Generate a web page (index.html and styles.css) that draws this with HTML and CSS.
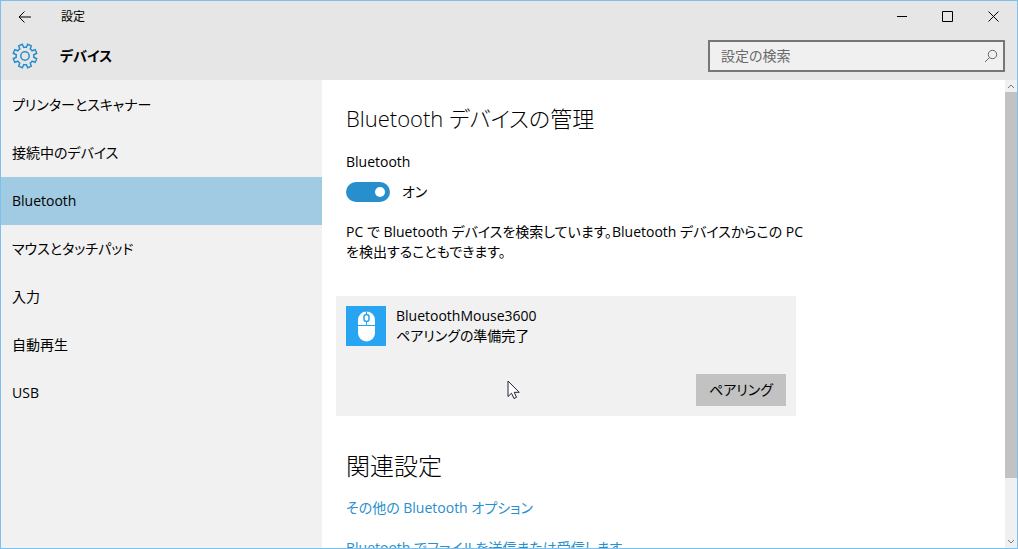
FILE: index.html
```
<!DOCTYPE html>
<html lang="ja">
<head>
  <meta charset="UTF-8">
  <meta name="viewport" content="width=device-width, initial-scale=1.0">
  <title>設定</title>
  <link rel="stylesheet" href="styles.css">
</head>
<body>
  <div class="window">
    <header class="header">
      <div class="title-bar">
        <button type="button" class="back" aria-label="戻る">
          <svg width="14" height="12" viewBox="0 0 14 12"><path d="M13 6H1M6.500 .5L1 6l5.500 5.500"/></svg>
        </button>
        <span class="window-name">設定</span>
        <div class="caption">
          <button type="button" aria-label="最小化">
            <svg width="12" height="12" viewBox="0 0 12 12"><path d="M1 5.500h10"/></svg>
          </button>
          <button type="button" aria-label="最大化">
            <svg width="12" height="12" viewBox="0 0 12 12"><path d="M.5 .5h10v10h-10z"/></svg>
          </button>
          <button type="button" aria-label="閉じる">
            <svg width="12" height="12" viewBox="0 0 12 12"><path d="M.5 .5l10 10M10.500 .5l-10 10"/></svg>
          </button>
        </div>
      </div>
      <div class="page-bar">
        <svg class="gear" width="26" height="26" viewBox="0 0 26 26">
          <path d="M10.300 1.300L11.700 4.300Q13 4 14.300 4.300L15.700 1.300L19.300 2.800L18.200 5.900Q19.300 6.700 20.100 7.800L23.200 6.700L24.700 10.300L21.700 11.700Q22 13 21.700 14.300L24.700 15.700L23.200 19.300L20.100 18.200Q19.300 19.300 18.200 20.100L19.300 23.200L15.700 24.700L14.300 21.700Q13 22 11.700 21.700L10.300 24.700L6.700 23.200L7.800 20.100Q6.700 19.300 5.900 18.200L2.800 19.300L1.300 15.700L4.300 14.300Q4 13 4.300 11.700L1.300 10.300L2.800 6.700L5.900 7.800Q6.700 6.700 7.800 5.900L6.700 2.800Z"/>
          <circle cx="13" cy="13" r="4.200"/>
        </svg>
        <h1>デバイス</h1>
        <form class="search">
          <input type="text" placeholder="設定の検索" aria-label="設定の検索">
          <button type="button" aria-label="検索">
            <svg width="14" height="14" viewBox="0 0 14 14"><circle cx="8.500" cy="5.500" r="4.200"/><path d="M5.500 8.500L1 13"/></svg>
          </button>
        </form>
      </div>
    </header>
    <div class="main">
      <nav class="sidebar">
        <a href="#">プリンターとスキャナー</a>
        <a href="#">接続中のデバイス</a>
        <a href="#" class="current">Bluetooth</a>
        <a href="#">マウスとタッチパッド</a>
        <a href="#">入力</a>
        <a href="#">自動再生</a>
        <a href="#">USB</a>
      </nav>
      <div class="content">
        <h2>Bluetooth デバイスの管理</h2>
        <label class="switch-label" for="bluetooth">Bluetooth</label>
        <div class="switch-row">
          <input type="checkbox" id="bluetooth" class="switch" checked>
          <span>オン</span>
        </div>
        <p class="note">PC で Bluetooth デバイスを検索しています。Bluetooth デバイスからこの PC<br>を検出することもできます。</p>
        <div class="device">
          <div class="device-info">
            <svg width="40" height="40" viewBox="0 0 40 40">
              <rect width="40" height="40" fill="#27a4f2"/>
              <path d="M12 19v-5a8.500 8.500 0 0 1 17 0v5z" fill="#fff"/>
              <path d="M12 20h17v7a8.500 8.500 0 0 1-17 0z" fill="#fff"/>
              <path d="M20.500 5v14" stroke="#27a4f2"/>
              <rect x="18" y="8.500" width="5" height="7" rx="2.500" fill="#fff" stroke="#27a4f2" stroke-width="1.500"/>
            </svg>
            <div>
              <div>BluetoothMouse3600</div>
              <div>ペアリングの準備完了</div>
            </div>
          </div>
          <button type="button" class="pair">ペアリング</button>
          <svg class="pointer" width="14" height="20" viewBox="0 0 14 20"><path d="M1 1v15.500l3.500-3.300 2.500 5.300 2.500-1.200-2.300-5h5z"/></svg>
        </div>
        <h2 class="related">関連設定</h2>
        <a href="#" class="link">その他の Bluetooth オプション</a>
        <a href="#" class="link">Bluetooth でファイルを送信または受信します</a>
      </div>
      <div class="scrollbar">
        <svg width="12" height="12" viewBox="0 0 12 12"><path d="M3 8l3-3 3 3"/></svg>
        <div class="track"><div class="thumb"></div></div>
        <svg width="12" height="12" viewBox="0 0 12 12"><path d="M3 4l3 3 3-3"/></svg>
      </div>
    </div>
  </div>
</body>
</html>
```
FILE: styles.css
```
* {
  box-sizing: border-box;
}
body {
  margin: 0;
  color: #000;
  font: 14px/20px "Open Sans", "Noto Sans CJK JP", sans-serif;
  font-feature-settings: "palt";
}
button, input {
  font: inherit;
  font-feature-settings: inherit;
  color: inherit;
  border: 0;
  padding: 0;
  background: none;
}
a {
  color: inherit;
  text-decoration: none;
}
svg {
  display: block;
  flex: none;
  fill: none;
  stroke-width: 1;
}
h1, h2, p {
  margin: 0;
}
.window {
  height: 100vh;
  display: flex;
  flex-direction: column;
  border: 1px solid #7cc0ee;
  overflow: hidden;
}
.header {
  flex: none;
  background: #e6e6e6;
}
.title-bar {
  height: 31px;
  display: flex;
  align-items: center;
}
.title-bar button {
  height: 31px;
  width: 46px;
  display: flex;
  align-items: center;
  justify-content: center;
}
.title-bar svg {
  stroke: #000;
}
.title-bar .back {
  width: 48px;
}
.window-name {
  margin-left: 12px;
  font-size: 12px;
}
.caption {
  display: flex;
  margin-left: auto;
}
.page-bar {
  height: 48px;
  display: flex;
  align-items: center;
  padding: 0 12px 0 11px;
}
.gear {
  stroke: #298fcc;
  stroke-width: 1.500;
  margin-right: 22px;
}
h1 {
  font-size: 14px;
  font-weight: 600;
}
.search {
  width: 297px;
  height: 32px;
  margin-left: auto;
  display: flex;
  align-items: center;
  border: 2px solid #767676;
  background: #f0f0f0;
}
.search input {
  flex: 1;
  min-width: 0;
  padding-left: 11px;
  outline: none;
}
.search input::placeholder {
  color: #6a6a6a;
}
.search button {
  padding: 0 5px;
}
.search svg {
  stroke: #666;
}
.main {
  flex: 1;
  min-height: 0;
  display: flex;
  background: #fff;
}
.sidebar {
  flex: none;
  width: 321px;
  padding-top: 1px;
  background: #f1f1f1;
}
.sidebar a {
  display: flex;
  align-items: center;
  height: 48px;
  padding-left: 11px;
}
.sidebar .current {
  background: #a1cae3;
}
.content {
  flex: 1;
  min-width: 0;
  padding: 22px 24px 0;
  overflow: hidden;
}
h2 {
  font-size: 22px;
  line-height: 32px;
  font-weight: 300;
  margin-bottom: 18px;
}
.related {
  font-size: 24px;
}
.switch-label {
  display: block;
  margin-bottom: 10px;
}
.switch-row {
  display: flex;
  align-items: center;
  gap: 12px;
}
.switch {
  appearance: none;
  display: flex;
  align-items: center;
  justify-content: flex-end;
  width: 44px;
  height: 20px;
  margin: 0;
  padding: 0 5px;
  border-radius: 10px;
  background: #298fcc;
}
.switch::before {
  content: "";
  width: 10px;
  height: 10px;
  border-radius: 50%;
  background: #fff;
}
.note {
  margin-top: 20px;
  white-space: nowrap;
}
.device {
  position: relative;
  max-width: 460px;
  margin: 34px 0 34px -10px;
  padding: 10px;
  background: #f1f1f1;
}
.device-info {
  display: flex;
  gap: 10px;
}
.pair {
  display: block;
  width: 90px;
  height: 32px;
  margin: 28px 0 0 auto;
  background: #c2c2c2;
}
/* mouse pointer resting over the card */
.pointer {
  position: absolute;
  left: 171px;
  top: 84px;
  fill: #fff;
  stroke: #223;
}
.link {
  display: block;
  margin-bottom: 20px;
  color: #298fcc;
}
.related + .link {
  margin-top: -2px;
}
.scrollbar {
  flex: none;
  width: 12px;
  display: flex;
  flex-direction: column;
  background: #f0f0f0;
}
.scrollbar svg {
  stroke: #777;
}
.track {
  flex: 1;
}
.thumb {
  height: 87%;
  background: #c2c2c2;
}
```
